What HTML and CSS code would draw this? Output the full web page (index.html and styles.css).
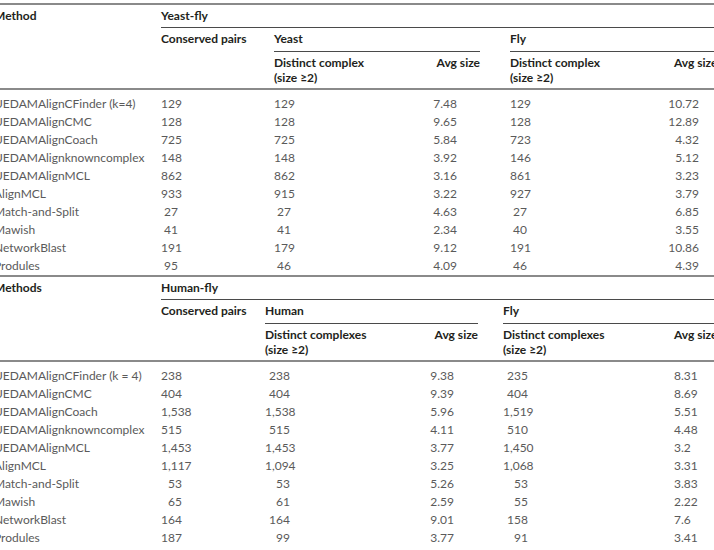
FILE: index.html
```html
<!DOCTYPE html>
<html>
<head>
  <meta charset="utf-8">
  <link rel="stylesheet" href="styles.css">
</head>
<body>
  <div class="sheet">
    <!-- Yeast-fly -->
    <table class="grid t1">
      <colgroup>
        <col class="c-method"><col class="c-pairs"><col class="c-dist"><col class="c-avg"><col class="c-gap"><col class="c-dist2"><col class="c-avg2">
      </colgroup>
      <thead>
        <tr class="row-a">
          <th rowspan="3">Method</th>
          <th colspan="6" class="rule">Yeast-fly</th>
        </tr>
        <tr class="row-b">
          <th rowspan="2">Conserved pairs</th>
          <th colspan="2" class="rule">Yeast</th>
          <th rowspan="2"></th>
          <th colspan="2" class="rule">Fly</th>
        </tr>
        <tr class="row-c">
          <th>Distinct complex<br>(size ≥2)</th>
          <th class="avg">Avg size</th>
          <th>Distinct complex<br>(size ≥2)</th>
          <th class="avg-end">Avg size</th>
        </tr>
      </thead>
      <tbody>
        <tr><td>UEDAMAlignCFinder (k=4)</td><td>129</td><td>129</td><td>7.48</td><td></td><td>129</td><td>10.72</td></tr>
        <tr><td>UEDAMAlignCMC</td><td>128</td><td>128</td><td>9.65</td><td></td><td>128</td><td>12.89</td></tr>
        <tr><td>UEDAMAlignCoach</td><td>725</td><td>725</td><td>5.84</td><td></td><td>723</td><td>4.32</td></tr>
        <tr><td>UEDAMAlignknowncomplex</td><td>148</td><td>148</td><td>3.92</td><td></td><td>146</td><td>5.12</td></tr>
        <tr><td>UEDAMAlignMCL</td><td>862</td><td>862</td><td>3.16</td><td></td><td>861</td><td>3.23</td></tr>
        <tr><td>AlignMCL</td><td>933</td><td>915</td><td>3.22</td><td></td><td>927</td><td>3.79</td></tr>
        <tr><td>Match-and-Split</td><td>27</td><td>27</td><td>4.63</td><td></td><td>27</td><td>6.85</td></tr>
        <tr><td>Mawish</td><td>41</td><td>41</td><td>2.34</td><td></td><td>40</td><td>3.55</td></tr>
        <tr><td>NetworkBlast</td><td>191</td><td>179</td><td>9.12</td><td></td><td>191</td><td>10.86</td></tr>
        <tr><td>Produles</td><td>95</td><td>46</td><td>4.09</td><td></td><td>46</td><td>4.39</td></tr>
      </tbody>
    </table>

    <!-- Human-fly -->
    <table class="grid t2">
      <colgroup>
        <col class="c-method"><col class="c-pairs"><col class="c-dist"><col class="c-avg"><col class="c-gap"><col class="c-dist2"><col class="c-avg2">
      </colgroup>
      <thead>
        <tr class="row-a">
          <th rowspan="3">Methods</th>
          <th colspan="6" class="rule">Human-fly</th>
        </tr>
        <tr class="row-b">
          <th rowspan="2">Conserved pairs</th>
          <th colspan="2" class="rule">Human</th>
          <th rowspan="2"></th>
          <th colspan="2" class="rule">Fly</th>
        </tr>
        <tr class="row-c">
          <th>Distinct complexes<br>(size ≥2)</th>
          <th class="avg">Avg size</th>
          <th>Distinct complexes<br>(size ≥2)</th>
          <th class="avg-end">Avg size</th>
        </tr>
      </thead>
      <tbody>
        <tr><td>UEDAMAlignCFinder (k = 4)</td><td>238</td><td>238</td><td>9.38</td><td></td><td>235</td><td>8.31</td></tr>
        <tr><td>UEDAMAlignCMC</td><td>404</td><td>404</td><td>9.39</td><td></td><td>404</td><td>8.69</td></tr>
        <tr><td>UEDAMAlignCoach</td><td>1,538</td><td>1,538</td><td>5.96</td><td></td><td>1,519</td><td>5.51</td></tr>
        <tr><td>UEDAMAlignknowncomplex</td><td>515</td><td>515</td><td>4.11</td><td></td><td>510</td><td>4.48</td></tr>
        <tr><td>UEDAMAlignMCL</td><td>1,453</td><td>1,453</td><td>3.77</td><td></td><td>1,450</td><td>3.2</td></tr>
        <tr><td>AlignMCL</td><td>1,117</td><td>1,094</td><td>3.25</td><td></td><td>1,068</td><td>3.31</td></tr>
        <tr><td>Match-and-Split</td><td>53</td><td>53</td><td>5.26</td><td></td><td>53</td><td>3.83</td></tr>
        <tr><td>Mawish</td><td>65</td><td>61</td><td>2.59</td><td></td><td>55</td><td>2.22</td></tr>
        <tr><td>NetworkBlast</td><td>164</td><td>164</td><td>9.01</td><td></td><td>158</td><td>7.6</td></tr>
        <tr><td>Produles</td><td>187</td><td>99</td><td>3.77</td><td></td><td>91</td><td>3.41</td></tr>
      </tbody>
    </table>
  </div>
</body>
</html>
```

FILE: styles.css
```css
body {
  margin: 0;
  background: #fff;
  overflow: hidden;
  font-family: Lato, "Open Sans", sans-serif;
  font-size: 12px;
}

.sheet {
  margin-left: -6px;
  padding-top: 3px;
}

.grid {
  border-collapse: collapse;
  table-layout: fixed;
  width: 728px;
}

.grid th,
.grid td {
  padding: 0;
  text-align: left;
  vertical-align: top;
  white-space: nowrap;
}

.grid th {
  font-weight: 700;
  color: #231f20;
  line-height: 15px;
}

.grid thead {
  border-bottom: 2px solid #8a8a8a;
}

.t1 {
  border-top: 2px solid #8a8a8a;
  border-bottom: 2px solid #8a8a8a;
}

.c-method { width: 167px; }
.c-avg { width: 60px; }
.c-avg2 { width: 82px; }

.t1 .c-pairs { width: 113px; }
.t1 .c-dist { width: 146px; }
.t1 .c-gap { width: 30px; }
.t1 .c-dist2 { width: 130px; }

.t2 .c-pairs { width: 104px; }
.t2 .c-dist { width: 155px; }
.t2 .c-avg { width: 58px; }
.t2 .c-gap { width: 25px; }
.t2 .c-dist2 { width: 137px; }

/* header rows */
.row-a th {
  height: 19px;
  padding-top: 3px;
}

.row-b th {
  height: 20px;
  padding-top: 3px;
}

.row-c th {
  height: 33px;
  padding-top: 3px;
}

.grid th.rule {
  border-bottom: 1px solid #4a4a4a;
}

.grid th.avg {
  text-align: right;
}

.grid th.avg-end {
  padding-left: 34px;
}

/* body rows */
.grid td {
  color: #5a5a5a;
  line-height: 18px;
  text-align: right;
}

.grid td:first-child {
  text-align: left;
}

.grid tbody tr:first-child td {
  padding-top: 5px;
}

.t1 td:nth-child(2) { padding-right: 96px; }
.t1 td:nth-child(3) { padding-right: 129px; }
.t1 td:nth-child(4) { padding-right: 23px; }
.t1 td:nth-child(6) { padding-right: 113px; }
.t1 td:nth-child(7) { padding-right: 23px; }

.t2 td:nth-child(2) { padding-right: 83px; }
.t2 td:nth-child(3) { padding-right: 130px; }
.t2 td:nth-child(4) { padding-right: 24px; }
.t2 td:nth-child(6) { padding-right: 112px; }
.t2 td:nth-child(7) {
  text-align: left;
  padding-left: 34px;
}
```
